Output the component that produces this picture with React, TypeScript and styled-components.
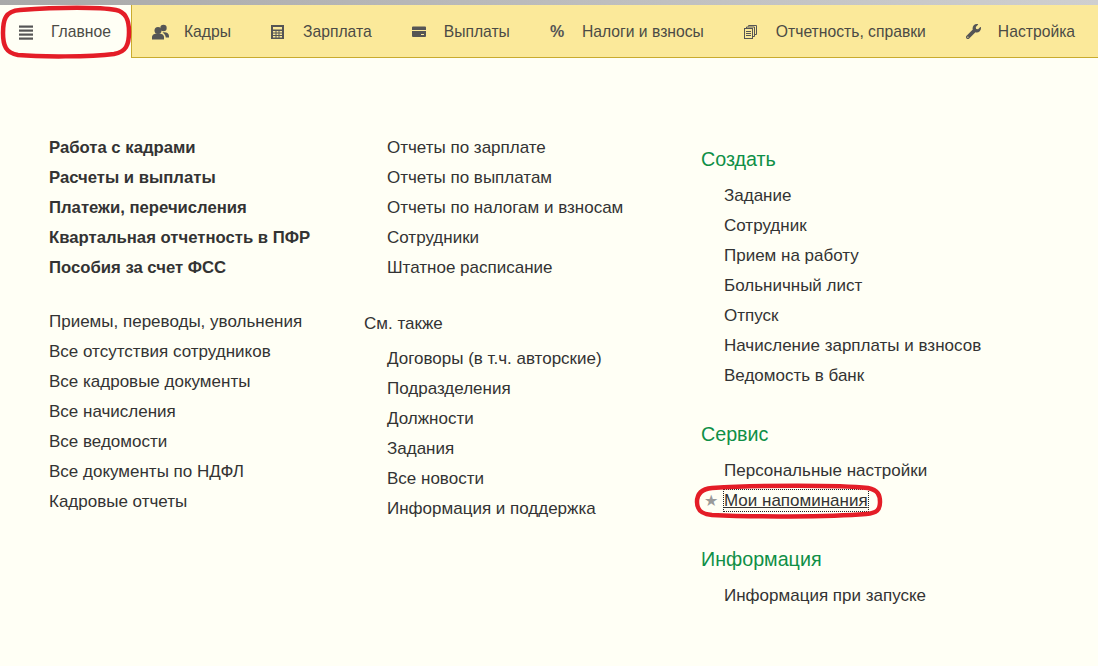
import { FC, ReactNode } from "react";
import styled, { createGlobalStyle } from "styled-components";
import { FaWrench } from "react-icons/fa";

const GlobalStyle = createGlobalStyle`
  html, body {
    margin: 0;
    padding: 0;
    background: #fffff5;
    font-family: "Liberation Sans", Arial, sans-serif;
  }
`;

const Page = styled.div`
  position: relative;
  width: 1098px;
  height: 666px;
  overflow: hidden;
  background: #fffff5;
`;

const TopStrip = styled.div`
  height: 5px;
  background: linear-gradient(to right, #a9a9a9, #cfcfcf);
`;

const TabBar = styled.nav`
  display: flex;
  height: 52px;
  background: #fbe99a;
  border-bottom: 1px solid #c9ab2e;
`;

const Tab = styled.div<{ $active?: boolean }>`
  display: flex;
  align-items: center;
  padding: 1px 20px 0 ${({ $active }) => ($active ? "19px" : "20px")};
  margin-bottom: ${({ $active }) => ($active ? "-1px" : "0")};
  font-size: 15.7px;
  color: #4b4b45;
  background: ${({ $active }) => ($active ? "#fffff5" : "transparent")};
  border-right: ${({ $active }) => ($active ? "1px solid #c9ab2e" : "none")};
  white-space: nowrap;
`;

const TabIcon = styled.span`
  display: flex;
  align-items: center;
  width: 32px;
  flex: none;
`;

const Percent = styled.span`
  font-size: 16px;
  font-weight: 700;
  color: #555;
`;

const Content = styled.main`
  display: grid;
  grid-template-columns: 315px 337px 1fr;
  padding: 75px 0 0 49px;
`;

const ColumnOne = styled.div`
  display: flex;
  flex-direction: column;
  gap: 24px;
`;

const ColumnTwo = styled.div`
  display: flex;
  flex-direction: column;
`;

const ColumnThree = styled.div`
  display: flex;
  flex-direction: column;
  gap: 32px;
  padding-top: 15px;
`;

const List = styled.div`
  display: flex;
  flex-direction: column;
`;

const Indented = styled(List)`
  padding-left: 23px;
`;

const Item = styled.div<{ $bold?: boolean }>`
  position: relative;
  height: 30px;
  line-height: 30px;
  font-size: ${({ $bold }) => ($bold ? "16.7px" : "17px")};
  font-weight: ${({ $bold }) => ($bold ? 700 : 400)};
  color: #333;
  white-space: nowrap;
`;

const SeeAlso = styled.div`
  height: 30px;
  line-height: 30px;
  margin: 26px 0 5px;
  font-size: 17px;
  color: #333;
`;

const Section = styled.section`
  display: flex;
  flex-direction: column;
`;

const SectionTitle = styled.h2`
  margin: 0 0 9px;
  height: 24px;
  line-height: 22px;
  font-size: 19.7px;
  font-weight: 400;
  color: #0f8f47;
`;

const Star = styled.span`
  position: absolute;
  left: -20px;
  top: 0;
  font-size: 16px;
  color: #9a9a9a;
`;

const Focused = styled.span`
  outline: 1px dotted #222;
  padding: 1px 0;
  text-decoration: underline;
`;

const Marker = styled.svg`
  position: absolute;
  inset: 0;
  width: 1098px;
  height: 666px;
  pointer-events: none;
  fill: none;
  stroke: #e41d27;
  stroke-width: 4.5;
`;

const MenuIcon = () => (
  <svg width="14" height="15" viewBox="0 0 14 15" fill="#555">
    <rect y="0.5" width="14" height="2.2" />
    <rect y="4.5" width="14" height="2.2" />
    <rect y="8.5" width="14" height="2.2" />
    <rect y="12.5" width="14" height="2.2" />
  </svg>
);

const UsersIcon = () => (
  <svg width="17" height="16" viewBox="0 0 17 16" fill="#555">
    <circle cx="11.5" cy="4" r="3.2" />
    <path d="M10.5 8.5c3.5-.8 6.5.5 6.5 3.5v1.5h-3.2c-.2-2-1.3-3.7-3.3-5z" />
    <circle cx="6" cy="6.5" r="3.5" />
    <path d="M0 15.5v-2.5c0-2.5 2.8-3.5 6-3.5s6 1 6 3.5v2.5z" />
  </svg>
);

const CalcIcon = () => (
  <svg width="13" height="15" viewBox="0 0 13 15">
    <path
      fill="#555"
      fillRule="evenodd"
      d="M0 1h13v14H0z M2 3v2.5h9V3z M2 7v1.5h2.5V7z M5.5 7v1.5h2V7z M8.5 7v1.5H11V7z M2 9.5V11h2.5V9.5z M5.5 9.5V11h2V9.5z M8.5 9.5V11H11V9.5z M2 12v1.5h2.5V12z M5.5 12v1.5h2V12z M8.5 12v1.5H11V12z"
    />
  </svg>
);

const CardIcon = () => (
  <svg width="14" height="14" viewBox="0 0 14 14">
    <path fill="#555" d="M1 1.5h12a1 1 0 0 1 1 1V5H0V2.5a1 1 0 0 1 1-1z" />
    <path fill="#555" d="M0 6h14v5a1 1 0 0 1-1 1H1a1 1 0 0 1-1-1z" />
    <rect x="9" y="9" width="3" height="1" fill="#fbe99a" />
  </svg>
);

const PagesIcon = () => (
  <svg width="13" height="14" viewBox="0 0 13 14" fill="none" stroke="#555" strokeWidth="1">
    <rect x="0.5" y="3.5" width="8" height="10" />
    <path d="M2.5 3.5V2H10.5V11.5H8.5" />
    <path d="M4.5 1.5V0.5H12.5V9.5H10.5" />
    <path d="M2 6.5H7M2 8.5H7M2 10.5H7" />
  </svg>
);

const tabs: { label: string; icon: ReactNode; active?: boolean }[] = [
  { label: "Главное", icon: <MenuIcon />, active: true },
  { label: "Кадры", icon: <UsersIcon /> },
  { label: "Зарплата", icon: <CalcIcon /> },
  { label: "Выплаты", icon: <CardIcon /> },
  { label: "Налоги и взносы", icon: <Percent>%</Percent> },
  { label: "Отчетность, справки", icon: <PagesIcon /> },
  { label: "Настройка", icon: <FaWrench size={15} color="#555" /> },
];

const columnOne = {
  bold: [
    "Работа с кадрами",
    "Расчеты и выплаты",
    "Платежи, перечисления",
    "Квартальная отчетность в ПФР",
    "Пособия за счет ФСС",
  ],
  plain: [
    "Приемы, переводы, увольнения",
    "Все отсутствия сотрудников",
    "Все кадровые документы",
    "Все начисления",
    "Все ведомости",
    "Все документы по НДФЛ",
    "Кадровые отчеты",
  ],
};

const columnTwo = {
  reports: [
    "Отчеты по зарплате",
    "Отчеты по выплатам",
    "Отчеты по налогам и взносам",
    "Сотрудники",
    "Штатное расписание",
  ],
  seeAlso: [
    "Договоры (в т.ч. авторские)",
    "Подразделения",
    "Должности",
    "Задания",
    "Все новости",
    "Информация и поддержка",
  ],
};

const create = [
  "Задание",
  "Сотрудник",
  "Прием на работу",
  "Больничный лист",
  "Отпуск",
  "Начисление зарплаты и взносов",
  "Ведомость в банк",
];

const App: FC = () => (
  <Page>
    <GlobalStyle />
    <TopStrip />
    <TabBar>
      {tabs.map((tab) => (
        <Tab key={tab.label} $active={tab.active}>
          <TabIcon>{tab.icon}</TabIcon>
          {tab.label}
        </Tab>
      ))}
    </TabBar>
    <Content>
      <ColumnOne>
        <List>
          {columnOne.bold.map((item) => (
            <Item key={item} $bold>{item}</Item>
          ))}
        </List>
        <List>
          {columnOne.plain.map((item) => (
            <Item key={item}>{item}</Item>
          ))}
        </List>
      </ColumnOne>
      <ColumnTwo>
        <Indented>
          {columnTwo.reports.map((item) => (
            <Item key={item}>{item}</Item>
          ))}
        </Indented>
        <SeeAlso>См. также</SeeAlso>
        <Indented>
          {columnTwo.seeAlso.map((item) => (
            <Item key={item}>{item}</Item>
          ))}
        </Indented>
      </ColumnTwo>
      <ColumnThree>
        <Section>
          <SectionTitle>Создать</SectionTitle>
          <Indented>
            {create.map((item) => (
              <Item key={item}>{item}</Item>
            ))}
          </Indented>
        </Section>
        <Section>
          <SectionTitle>Сервис</SectionTitle>
          <Indented>
            <Item>Персональные настройки</Item>
            <Item>
              <Star>★</Star>
              <Focused>Мои напоминания</Focused>
            </Item>
          </Indented>
        </Section>
        <Section>
          <SectionTitle>Информация</SectionTitle>
          <Indented>
            <Item>Информация при запуске</Item>
          </Indented>
        </Section>
      </ColumnThree>
    </Content>
    <Marker viewBox="0 0 1098 666">
      <path d="M20 10 C60 7 100 7 116 10 C126 12 129 20 129 32 C129 45 126 52 114 54 C90 57 40 57 18 55 C6 53 3 46 3 33 C3 20 5 11 20 10 Z" />
      <path d="M712 488 C760 485 840 485 868 488 C878 490 880 495 880 502 C880 510 877 513 866 514 C830 517 750 517 712 515 C701 514 697 510 697 502 C697 494 701 489 712 488 Z" />
    </Marker>
  </Page>
);

export default App;
